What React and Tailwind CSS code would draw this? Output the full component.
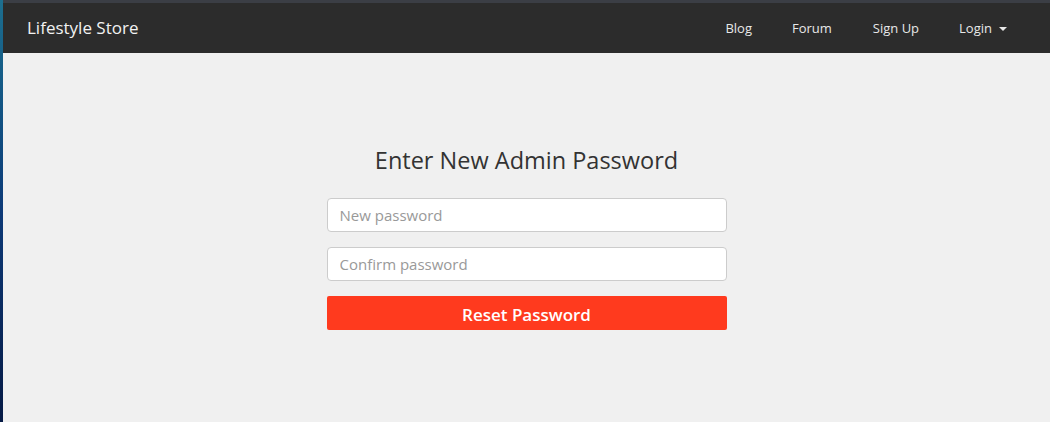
import { useState } from 'react'

function App() {
  const [nuevo, setNuevo] = useState('')
  const [confirmar, setConfirmar] = useState('')

  return (
    <div className="flex h-[422px] w-[1050px] overflow-hidden bg-[#f0f0f0]" style={{ fontFamily: '"Open Sans", "Liberation Sans", sans-serif' }}>
      {/* borde del escritorio */}
      <div className="w-[3px] shrink-0 bg-gradient-to-b from-[#1d6f8f] via-[#0d3a78] to-[#061a45]" />

      <div className="flex flex-1 flex-col">
        <div className="h-[3px] bg-[#3b3e45]" />

        {/* Navbar */}
        <nav className="flex h-[50px] items-center justify-between bg-[#2c2c2c] pl-[24px] pr-[43px]">
          <span className="text-[17px] text-[#f2f2f2]">Lifestyle Store</span>
          <div className="flex items-center pt-[2px] text-[13px] text-[#e8e8e8]">
            <a className="mr-[40px]">Blog</a>
            <a className="mr-[41px]">Forum</a>
            <a className="mr-[40px]">Sign Up</a>
            <a className="flex items-center">
              Login
              <span className="ml-[7px] inline-block h-0 w-0 border-x-[4px] border-t-[4px] border-x-transparent border-t-[#e8e8e8]" />
            </a>
          </div>
        </nav>

        {/* Formulario */}
        <div className="flex flex-1 justify-center pt-[92px]">
          <div className="flex w-[400px] flex-col">
            <h3 className="mb-[23px] text-center text-[23.5px] leading-[30px] text-[#333]">Enter New Admin Password</h3>
            <input
              type="password"
              placeholder="New password"
              value={nuevo}
              onChange={(e) => setNuevo(e.target.value)}
              className="mb-[15px] h-[34px] rounded-[4px] border border-[#ccc] bg-white px-[12px] text-[15px] text-[#555] placeholder:text-[#999] outline-none"
            />
            <input
              type="password"
              placeholder="Confirm password"
              value={confirmar}
              onChange={(e) => setConfirmar(e.target.value)}
              className="mb-[15px] h-[34px] rounded-[4px] border border-[#ccc] bg-white px-[12px] text-[15px] text-[#555] placeholder:text-[#999] outline-none"
            />
            <button className="h-[34px] rounded-[2px] bg-[#ff3a1e] pt-[3px] text-[17px] font-semibold text-white">
              Reset Password
            </button>
          </div>
        </div>
      </div>
    </div>
  )
}

export default App
